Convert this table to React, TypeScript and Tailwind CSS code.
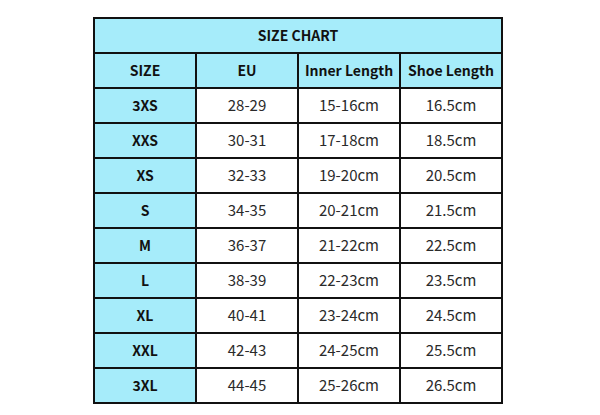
import React from "react";

const rows = [
  ["3XS", "28-29", "15-16cm", "16.5cm"],
  ["XXS", "30-31", "17-18cm", "18.5cm"],
  ["XS", "32-33", "19-20cm", "20.5cm"],
  ["S", "34-35", "20-21cm", "21.5cm"],
  ["M", "36-37", "21-22cm", "22.5cm"],
  ["L", "38-39", "22-23cm", "23.5cm"],
  ["XL", "40-41", "23-24cm", "24.5cm"],
  ["XXL", "42-43", "24-25cm", "25.5cm"],
  ["3XL", "44-45", "25-26cm", "26.5cm"],
];

export default function App() {
  return (
    <div
      className="w-[600px] h-[415px] bg-white pt-[17px] pl-[93px]"
      style={{ fontFamily: '"Noto Sans CJK SC", "Open Sans", sans-serif' }}
    >
      <table className="border-collapse border-2 border-[#111] text-[14px] text-[#2a2a2a]">
        <tbody>
          <tr className="h-[35px]">
            <td colSpan={4} className="border-2 border-[#111] bg-[#a6ecfa] text-center font-bold text-[#111]">
              SIZE CHART
            </td>
          </tr>
          <tr className="h-[35px]">
            {["SIZE", "EU", "Inner Length", "Shoe Length"].map((h) => (
              <td key={h} className="w-[102px] border-2 border-[#111] bg-[#a6ecfa] text-center font-bold text-[#111]">
                {h}
              </td>
            ))}
          </tr>
          {rows.map((r) => (
            <tr key={r[0]} className="h-[35px]">
              <td className="w-[102px] border-2 border-[#111] bg-[#a6ecfa] text-center font-bold text-[#111]">{r[0]}</td>
              <td className="w-[102px] border-2 border-[#111] text-center text-[15px]">{r[1]}</td>
              <td className="w-[102px] border-2 border-[#111] text-center text-[15px]">{r[2]}</td>
              <td className="w-[102px] border-2 border-[#111] text-center text-[15px]">{r[3]}</td>
            </tr>
          ))}
        </tbody>
      </table>
    </div>
  );
}
